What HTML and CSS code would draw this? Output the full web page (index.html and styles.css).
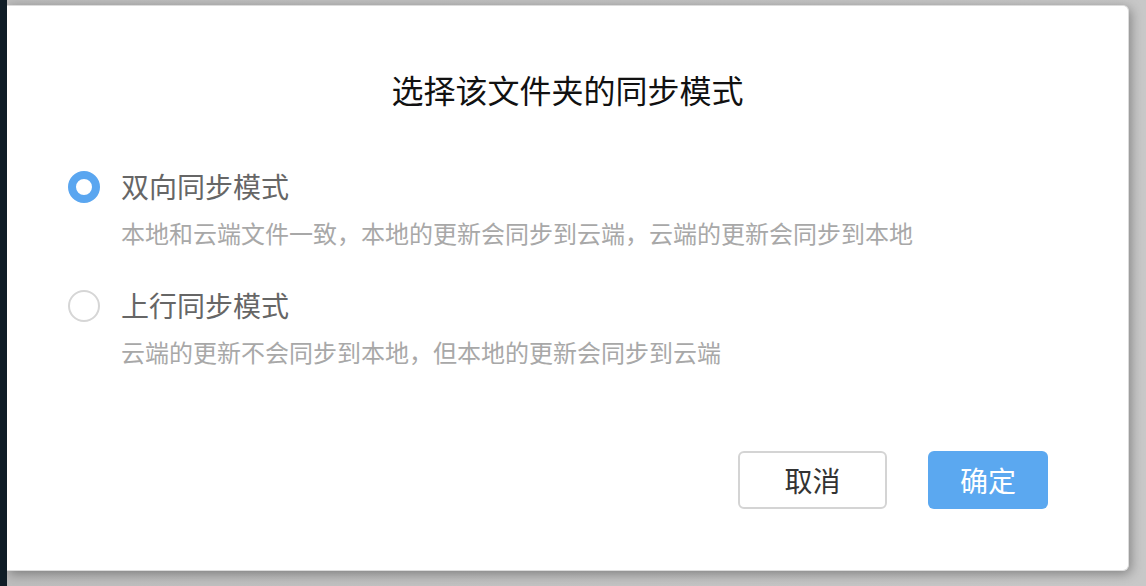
FILE: index.html
```html
<!DOCTYPE html>
<html lang="zh-CN">
<head>
<meta charset="utf-8">
<title>选择该文件夹的同步模式</title>
<link rel="stylesheet" href="styles.css">
</head>
<body>
<div class="screen">
  <div class="side-strip"></div>
  <div class="backdrop">
    <div class="dialog">
      <h1 class="title">选择该文件夹的同步模式</h1>
      <div class="options">
        <div class="option">
          <div class="option-row">
            <span class="radio radio-checked"></span>
            <span class="option-label">双向同步模式</span>
          </div>
          <p class="option-desc">本地和云端文件一致，本地的更新会同步到云端，云端的更新会同步到本地</p>
        </div>
        <div class="option">
          <div class="option-row">
            <span class="radio"></span>
            <span class="option-label">上行同步模式</span>
          </div>
          <p class="option-desc">云端的更新不会同步到本地，但本地的更新会同步到云端</p>
        </div>
      </div>
      <div class="actions">
        <button class="btn btn-cancel">取消</button>
        <button class="btn btn-ok">确定</button>
      </div>
    </div>
  </div>
</div>
</body>
</html>
```
FILE: styles.css
```css
* { box-sizing: border-box; }
html, body {
  margin: 0;
  padding: 0;
  width: 1146px;
  height: 586px;
  overflow: hidden;
  font-family: "Noto Sans CJK SC", "Noto Sans", sans-serif;
}
.screen {
  display: flex;
  width: 1146px;
  height: 586px;
}
.side-strip {
  width: 7px;
  flex: none;
  background: #0f1d27;
}
.backdrop {
  flex: 1;
  background: linear-gradient(90deg, #bdbdbd 0%, #c8c8c8 100%);
  padding: 5px 17px 15px 0;
  overflow: hidden;
}
.dialog {
  height: 566px;
  width: 1122px;
  background: #ffffff;
  border: 1px solid #dcdcdc;
  border-left: none;
  border-radius: 0 6px 6px 0;
  box-shadow: 2px 3px 12px rgba(0, 0, 0, 0.35);
  display: flex;
  flex-direction: column;
  padding: 61px 80px 61px 61px;
}
.title {
  margin: 0;
  font-size: 32px;
  line-height: 44px;
  font-weight: 400;
  color: #111;
  text-align: center;
  padding-left: 19px;
}
.options {
  margin-top: 55px;
  display: flex;
  flex-direction: column;
  gap: 35px;
}
.option-row {
  display: flex;
  align-items: center;
  gap: 21px;
}
.radio {
  width: 32px;
  height: 32px;
  border-radius: 50%;
  border: 2px solid #d6d6d6;
  flex: none;
  margin-top: 1px;
}
.radio-checked {
  border: 8.5px solid #5aa6f0;
}
.option-label {
  font-size: 28px;
  line-height: 40px;
  color: #666;
}
.option-desc {
  margin: 10px 0 0 53px;
  font-size: 24px;
  line-height: 34px;
  color: #a8a8a8;
}
.actions {
  margin-top: auto;
  display: flex;
  justify-content: flex-end;
  gap: 41px;
}
.btn {
  height: 58px;
  font-family: inherit;
  font-size: 28px;
  border-radius: 6px;
  padding: 0;
  cursor: pointer;
}
.btn-cancel {
  width: 149px;
  background: #fff;
  border: 2px solid #d4d4d4;
  color: #333;
}
.btn-ok {
  width: 120px;
  background: #5ba8f0;
  border: none;
  color: #fff;
}
```
